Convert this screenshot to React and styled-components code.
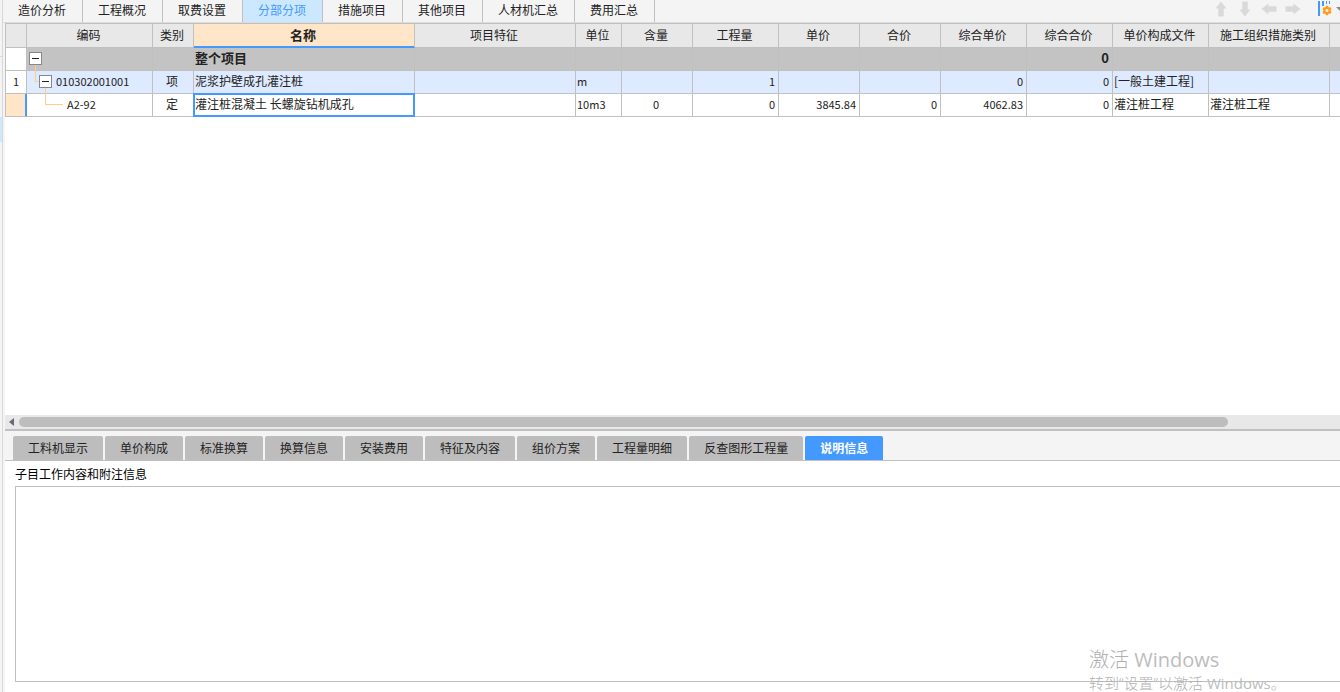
import React from "react";
import styled, { createGlobalStyle, css } from "styled-components";

const c = {
  bar: "#f4f4f4",
  head: "#e8e8e8",
  line: "#c0c0c0",
  group: "#c3c3c3",
  row: "#deeaff",
  accent: "#4499ff",
  accentSoft: "#cce8ff",
  peach: "#ffe6c8",
  tree: "#ffcc88",
  text: "#222222",
};

const GlobalStyle = createGlobalStyle`
  * { box-sizing: border-box; }
  body {
    margin: 0;
    background: #ffffff;
    color: ${c.text};
    font-family: "Noto Sans CJK SC", sans-serif;
    font-size: 12px;
  }
  button, textarea { font: inherit; color: inherit; }
  button { margin: 0; padding: 0; border: 0; background: none; }
`;

const Page = styled.div`
  display: flex;
  min-height: 100vh;
  position: relative;
`;

const Rail = styled.aside`
  flex: none;
  width: 3px;
  background: ${c.bar};
  border-right: 1px solid #d8d8d8;
`;

const RailSection = styled.div`
  height: 57px;
  border-bottom: 1px solid #d8d8d8;
`;

const RailMarker = styled.div`
  height: 25px;
  margin-top: 60px;
  background: ${c.accentSoft};
`;

const Main = styled.main`
  flex: 1;
  min-width: 0;
  display: flex;
  flex-direction: column;
`;

const TopBar = styled.header`
  display: flex;
  height: 23px;
  background: ${c.bar};
  border-bottom: 1px solid #dcdcdc;
`;

const TopTabs = styled.nav`
  display: flex;
`;

const TopTab = styled.button`
  padding: 0 16px 2px 15px;
  line-height: 20px;
  white-space: nowrap;
  border-right: 1px solid ${c.line};
  ${(p) => p.$active && css`
    background: ${c.accentSoft};
    color: ${c.accent};
  `}
`;

const Tools = styled.div`
  display: flex;
  margin-left: auto;
  height: 18px;
`;

const ToolButton = styled.button`
  display: flex;
  align-items: center;
  justify-content: center;
  width: 24px;
  color: #d9d9d9;
`;

const ColumnsButton = styled.button`
  display: flex;
  gap: 2px;
  margin-left: 13px;
  color: #8c8c8c;
`;

const Panes = styled.div`
  flex: 1;
  display: flex;
  flex-direction: column;
  padding-left: 2px;
  background: ${c.bar};
`;

const GridPane = styled.section`
  flex: 1;
  background: #ffffff;
`;

const Grid = styled.table`
  width: 100%;
  table-layout: fixed;
  border-collapse: separate;
  border-spacing: 0;
  border-top: 1px solid ${c.line};
  border-left: 1px solid ${c.line};

  tr > :last-child { border-right: 0; }
`;

const HeadCell = styled.th`
  height: 24px;
  padding: 0 2px 2px 0;
  line-height: 21px;
  font-weight: 400;
  white-space: nowrap;
  background: ${c.head};
  border-right: 1px solid ${c.line};
  border-bottom: 1px solid ${c.line};
  ${(p) => p.$current && css`
    font-size: 13px;
    font-weight: 700;
    background: ${c.peach};
    border-bottom-color: ${c.accent};
    box-shadow: inset 0 -1px 0 ${c.accent};
  `}
`;

const Cell = styled.td`
  position: relative;
  height: 23px;
  padding: 0 3px 2px 1px;
  line-height: 20px;
  white-space: nowrap;
  text-align: ${(p) => p.$align || "left"};
  border-right: 1px solid ${c.line};
  border-bottom: 1px solid ${c.line};
  ${(p) => p.$num && css`font-size: 11px;`}
  ${(p) => p.$selected && css`
    &::after {
      content: "";
      position: absolute;
      inset: -1px;
      border: 2px solid ${c.accent};
    }
  `}
`;

const IndexCell = styled(Cell)`
  padding: 0 0 2px;
  text-align: center;
  font-size: 11px;
  background: #ffffff;
  ${(p) => p.$current && css`
    background: ${c.peach};
    border-right-color: ${c.accent};
    box-shadow: inset -1px 0 0 ${c.accent};
  `}
`;

const Row = styled.tr`
  ${(p) => p.$kind === "group" && css`
    background: ${c.group};
    ${Cell} { font-size: 13px; font-weight: 700; }
  `}
  ${(p) => p.$kind === "item" && css`background: ${c.row};`}
`;

const TreeNode = styled.div`
  display: flex;
  align-items: center;
  gap: 4px;
  height: 20px;
  font-size: 11px;
  padding-left: ${(p) => p.$indent}px;
`;

/* Elbow that joins a tree node to its parent's toggle */
const Branch = styled.span`
  position: absolute;
  top: -6px;
  left: ${(p) => p.$left}px;
  width: ${(p) => p.$width}px;
  height: 17px;
  border: solid ${c.tree};
  border-width: 0 0 1px 1px;
`;

const Toggle = styled.button`
  display: flex;
  align-items: center;
  justify-content: center;
  width: 13px;
  height: 13px;
  background: #ffffff;
  border: 1px solid #888888;
  &::before {
    content: "";
    width: 7px;
    height: 1px;
    background: #222222;
  }
`;

const ScrollTrack = styled.div`
  display: flex;
  align-items: center;
  height: 14px;
  padding-left: 4px;
  gap: 5px;
  background: ${c.head};
`;

const ScrollThumb = styled.div`
  flex: 1;
  height: 10px;
  margin-right: 112px;
  border-radius: 5px;
  background: #bdbdbd;
`;

const DetailPane = styled.section`
  border-top: 2px solid ${c.line};
  background: #ffffff;
  padding-bottom: 10px;
`;

const DetailTabs = styled.nav`
  display: flex;
  gap: 2px;
  padding: 5px 0 0 8px;
  background: ${c.bar};
  border-bottom: 1px solid ${c.line};
`;

const DetailTab = styled.button`
  height: 24px;
  padding: 0 15px;
  line-height: 24px;
  white-space: nowrap;
  border-radius: 2px 2px 0 0;
  background: #bdbdbd;
  ${(p) => p.$active && css`
    background: ${c.accent};
    color: #ffffff;
    font-weight: 700;
  `}
`;

const NoteLabel = styled.label`
  display: block;
  padding-left: 10px;
  line-height: 25px;
  color: #000000;
`;

const NoteBox = styled.textarea`
  display: block;
  width: calc(100% - 10px);
  height: 196px;
  margin: 0 0 0 10px;
  padding: 4px;
  border: 1px solid ${c.line};
  border-right: 0;
  border-radius: 0;
  background: #ffffff;
  resize: none;
  outline: none;
`;

const Watermark = styled.div`
  position: absolute;
  right: 48px;
  bottom: 0;
  width: 203px;
  font-family: "Open Sans", "Noto Sans CJK SC", sans-serif;
  font-weight: 300;
  color: #b0b0b0;
  white-space: nowrap;
  pointer-events: none;
`;

const WatermarkTitle = styled.div`
  font-size: 20px;
  line-height: 28px;
`;

const WatermarkHint = styled.div`
  font-size: 15px;
  line-height: 18px;
`;

const Product = styled.span`
  font-weight: 400;
  color: #bcbcbc;
`;

const Arrow = ({ angle }) => (
  <svg width="16" height="16" viewBox="0 0 16 16" aria-hidden="true">
    <path
      d="M8 0.5 L13.5 7.5 H10.7 V15.5 H5.3 V7.5 H2.5 Z"
      fill="currentColor"
      transform={`rotate(${angle} 8 8)`}
    />
  </svg>
);

const ColumnsIcon = () => (
  <svg width="16" height="16" viewBox="0 0 16 16" aria-hidden="true">
    <path d="M0 1h2v15H0zM4 1h2v5H4zM8 1h1v3H8zM11 1h1v3h-1z" fill="#4499ff" />
    <g fill="#ff9a1f">
      <circle cx="9" cy="10.5" r="3.6" />
      <rect x="7.7" y="5.8" width="2.6" height="9.4" rx="0.6" />
      <rect x="7.7" y="5.8" width="2.6" height="9.4" rx="0.6" transform="rotate(60 9 10.5)" />
      <rect x="7.7" y="5.8" width="2.6" height="9.4" rx="0.6" transform="rotate(120 9 10.5)" />
    </g>
    <circle cx="9" cy="10.5" r="1.5" fill="#f4f4f4" />
  </svg>
);

const Caret = () => (
  <svg width="4" height="16" viewBox="0 0 4 16" aria-hidden="true">
    <path d="M0 7h8L4 11z" fill="currentColor" />
  </svg>
);

const topTabs = ["造价分析", "工程概况", "取费设置", "分部分项", "措施项目", "其他项目", "人材机汇总", "费用汇总"];

const tools = [
  { label: "上移", angle: 0 },
  { label: "下移", angle: 180 },
  { label: "左移", angle: 270 },
  { label: "右移", angle: 90 },
];

const columns = [
  { key: "code", title: "编码", width: 126 },
  { key: "type", title: "类别", width: 41, align: "center" },
  { key: "name", title: "名称", width: 221 },
  { key: "feature", title: "项目特征", width: 161 },
  { key: "unit", title: "单位", width: 46, num: true },
  { key: "content", title: "含量", width: 71, align: "center", num: true },
  { key: "quantity", title: "工程量", width: 86, align: "right", num: true },
  { key: "price", title: "单价", width: 81, align: "right", num: true },
  { key: "total", title: "合价", width: 81, align: "right", num: true },
  { key: "fullPrice", title: "综合单价", width: 86, align: "right", num: true },
  { key: "fullTotal", title: "综合合价", width: 86, align: "right", num: true },
  { key: "priceFile", title: "单价构成文件", width: 96 },
  { key: "measure", title: "施工组织措施类别", width: 121 },
  { key: "more", title: "" },
];

const rows = [
  { kind: "group", indent: 1, open: true, code: "", name: "整个项目", fullTotal: "0" },
  {
    kind: "item", index: "1", indent: 11, open: true, branch: { left: 8, width: 4 },
    code: "010302001001", type: "项", name: "泥浆护壁成孔灌注桩", unit: "m",
    quantity: "1", fullPrice: "0", fullTotal: "0", priceFile: "[一般土建工程]",
  },
  {
    kind: "leaf", current: true, indent: 39, branch: { left: 18, width: 18 },
    code: "A2-92", type: "定", name: "灌注桩混凝土 长螺旋钻机成孔", unit: "10m3", content: "0",
    quantity: "0", price: "3845.84", total: "0", fullPrice: "4062.83", fullTotal: "0",
    priceFile: "灌注桩工程", measure: "灌注桩工程",
  },
];

const detailTabs = [
  "工料机显示", "单价构成", "标准换算", "换算信息", "安装费用",
  "特征及内容", "组价方案", "工程量明细", "反查图形工程量", "说明信息",
];

const CodeContent = ({ row }) => (
  <TreeNode $indent={row.indent}>
    {row.branch && <Branch $left={row.branch.left} $width={row.branch.width} />}
    {row.open && <Toggle type="button" aria-label="折叠" aria-expanded="true" />}
    <span>{row.code}</span>
  </TreeNode>
);

export default function App() {
  return (
    <>
      <GlobalStyle />
      <Page>
        <Rail>
          <RailSection />
          <RailMarker />
        </Rail>
        <Main>
          <TopBar>
            <TopTabs>
              {topTabs.map((t) => (
                <TopTab key={t} type="button" $active={t === "分部分项"}>{t}</TopTab>
              ))}
            </TopTabs>
            <Tools>
              {tools.map((t) => (
                <ToolButton key={t.label} type="button" aria-label={t.label}>
                  <Arrow angle={t.angle} />
                </ToolButton>
              ))}
              <ColumnsButton type="button" aria-label="列设置">
                <ColumnsIcon />
                <Caret />
              </ColumnsButton>
            </Tools>
          </TopBar>
          <Panes>
            <GridPane>
              <Grid>
                <colgroup>
                  <col width="21" />
                  {columns.map((col) => <col key={col.key} width={col.width} />)}
                </colgroup>
                <thead>
                  <tr>
                    <HeadCell />
                    {columns.map((col) => (
                      <HeadCell key={col.key} scope="col" $current={col.key === "name"}>{col.title}</HeadCell>
                    ))}
                  </tr>
                </thead>
                <tbody>
                  {rows.map((row) => (
                    <Row key={row.kind} $kind={row.kind}>
                      <IndexCell $current={row.current}>{row.index}</IndexCell>
                      {columns.map((col) => (
                        <Cell
                          key={col.key}
                          $align={col.align}
                          $num={col.num}
                          $selected={row.current && col.key === "name"}
                        >
                          {col.key === "code" ? <CodeContent row={row} /> : row[col.key]}
                        </Cell>
                      ))}
                    </Row>
                  ))}
                </tbody>
              </Grid>
            </GridPane>
            <ScrollTrack>
              <svg width="5" height="8" viewBox="0 0 5 8" aria-hidden="true">
                <path d="M5 0v8L0 4z" fill="#666a78" />
              </svg>
              <ScrollThumb />
            </ScrollTrack>
            <DetailPane>
              <DetailTabs>
                {detailTabs.map((t) => (
                  <DetailTab key={t} type="button" $active={t === "说明信息"}>{t}</DetailTab>
                ))}
              </DetailTabs>
              <NoteLabel htmlFor="note">子目工作内容和附注信息</NoteLabel>
              <NoteBox id="note" />
            </DetailPane>
          </Panes>
        </Main>
        <Watermark>
          <WatermarkTitle>激活 <Product>Windows</Product></WatermarkTitle>
          <WatermarkHint>转到“设置”以激活 <Product>Windows</Product>。</WatermarkHint>
        </Watermark>
      </Page>
    </>
  );
}
